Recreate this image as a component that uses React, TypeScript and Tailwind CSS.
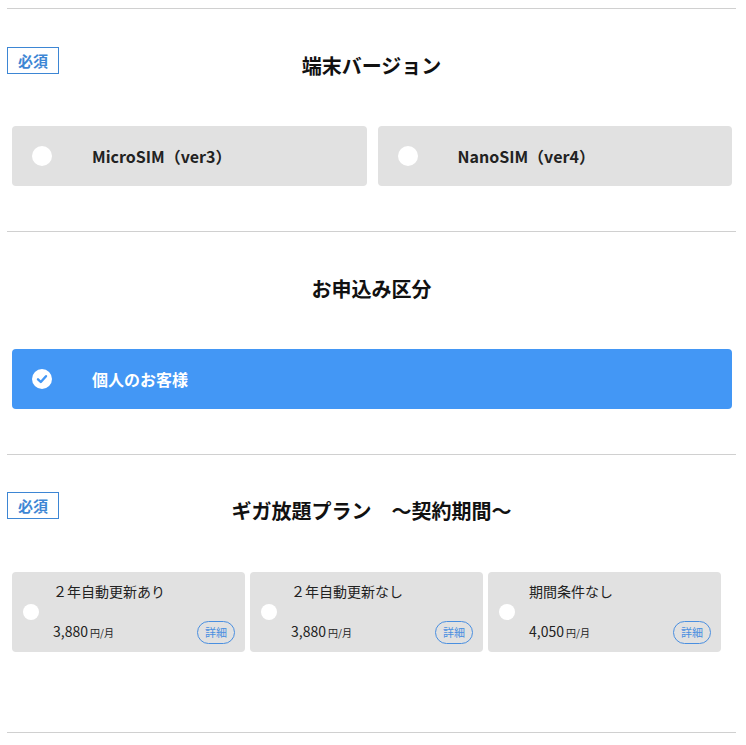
import React from 'react'

const font = { fontFamily: '"Noto Sans CJK JP", "Noto Sans", sans-serif' }

function Badge() {
  return (
    <span className="inline-flex h-[27px] w-[52px] items-center justify-center border border-[#3d86d4] text-[15px] font-bold leading-none text-[#3d86d4]">
      必須
    </span>
  )
}

function Header({ title, required }: { title: string; required?: boolean }) {
  return (
    <div className="grid grid-cols-[1fr_auto_1fr] items-start">
      <div>{required ? <Badge /> : null}</div>
      <h2 className="text-[20px] font-bold leading-[38px] text-[#111]">{title}</h2>
      <div />
    </div>
  )
}

function RadioCard({ label }: { label: string }) {
  return (
    <div className="flex h-[60px] items-center rounded-[4px] bg-[#e1e1e1]">
      <span className="ml-[20px] h-[20px] w-[20px] rounded-full bg-white" />
      <span className="ml-[40px] text-[16px] font-bold text-[#222]">{label}</span>
    </div>
  )
}

function PlanCard({ label, price }: { label: string; price: string }) {
  return (
    <div className="relative flex h-[80px] w-[233px] items-center rounded-[4px] bg-[#e1e1e1]">
      <span className="ml-[11px] h-[16px] w-[16px] shrink-0 rounded-full bg-white" />
      <div className="ml-[14px] flex h-full flex-col justify-between pb-[9px] pt-[9px]">
        <span className="text-[14px] leading-[20px] text-[#222]">{label}</span>
        <span className="text-[14px] leading-[20px] text-[#222]">
          {price}
          <span className="ml-[2px] text-[10px]">円/月</span>
        </span>
      </div>
      <span className="absolute bottom-[8px] right-[10px] flex h-[23px] w-[38px] items-center justify-center rounded-[12px] border border-[#4a8fe0] text-[11px] text-[#4a8fe0]">
        詳細
      </span>
    </div>
  )
}

export default function App() {
  return (
    <div className="min-h-[745px] w-[746px] bg-white" style={font}>
      <div className="ml-[7px] mr-[10px] pt-[8px]">
        {/* 端末バージョン */}
        <section className="border-t border-[#d0d0d0] pb-[45px] pt-[38px]">
          <Header title="端末バージョン" required />
          <div className="mt-[41px] grid grid-cols-2 gap-[11px] pl-[5px] pr-[4px]">
            <RadioCard label="MicroSIM（ver3）" />
            <RadioCard label="NanoSIM（ver4）" />
          </div>
        </section>

        {/* お申込み区分 */}
        <section className="border-t border-[#d0d0d0] pb-[45px] pt-[38px]">
          <Header title="お申込み区分" />
          <div className="mt-[41px] pl-[5px] pr-[4px]">
            <div className="flex h-[60px] items-center rounded-[4px] bg-[#4397f5]">
              <span className="ml-[20px] flex h-[20px] w-[20px] items-center justify-center rounded-full bg-white">
                <svg width="12" height="12" viewBox="0 0 12 12" fill="none">
                  <path d="M2 6.3 L4.8 9 L10 3.2" stroke="#4397f5" strokeWidth="2.4" strokeLinecap="round" strokeLinejoin="round" />
                </svg>
              </span>
              <span className="ml-[40px] text-[16px] font-bold text-white">個人のお客様</span>
            </div>
          </div>
        </section>

        {/* ギガ放題プラン */}
        <section className="border-t border-[#d0d0d0] pb-[80px] pt-[37px]">
          <Header title="ギガ放題プラン　〜契約期間〜" required />
          <div className="mt-[42px] flex gap-[5px] pl-[5px]">
            <PlanCard label="２年自動更新あり" price="3,880" />
            <PlanCard label="２年自動更新なし" price="3,880" />
            <PlanCard label="期間条件なし" price="4,050" />
          </div>
        </section>

        <div className="border-t border-[#d0d0d0]" />
      </div>
    </div>
  )
}
